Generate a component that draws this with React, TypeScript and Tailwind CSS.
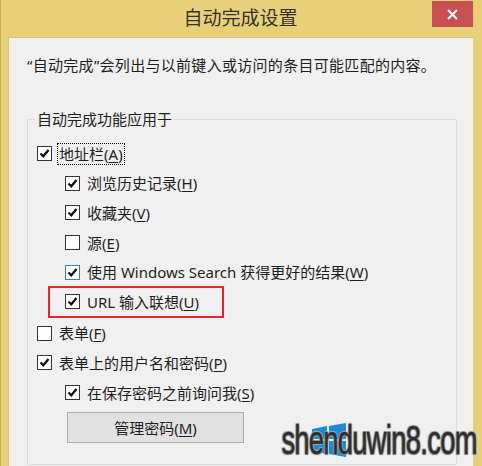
import React from 'react'

const font = { fontFamily: '"Noto Sans", "Noto Sans CJK SC", sans-serif' }

function Box({ checked, blue }: { checked: boolean; blue?: boolean }) {
    return (
        <span
            className={`flex h-[15px] w-[15px] shrink-0 items-center justify-center border bg-white ${
                blue ? 'border-[#3c7fb1]' : 'border-[#333333]'
            }`}
        >
            {checked && (
                <svg width="11" height="11" viewBox="0 0 11 11">
                    <path d="M1.5 5.5 L4.3 8.3 L9.5 2" fill="none" stroke="#111" strokeWidth="2.3" />
                </svg>
            )}
        </span>
    )
}

function Row({
    label,
    hot,
    checked,
    indent,
    blue,
    focus,
}: {
    label: string
    hot: string
    checked: boolean
    indent?: boolean
    blue?: boolean
    focus?: boolean
}) {
    return (
        <div className={`flex h-[29.6px] items-center gap-[5px] ${indent ? 'pl-[37px]' : 'pl-[9px]'}`}>
            <Box checked={checked} blue={blue} />
            <span
                className={`border px-[1px] text-[15px] leading-[20px] text-[#1e1e1e] ${
                    focus ? 'border-dotted border-black' : 'border-transparent'
                }`}
            >
                {label}(<span className="underline underline-offset-2">{hot}</span>)
            </span>
        </div>
    )
}

export default function App() {
    return (
        <div className="relative flex h-[466px] w-[482px] flex-col overflow-hidden border-l border-[#c9b05a] bg-[#e8d079] pl-[7px] pr-[9px]" style={font}>
            <div className="relative flex h-[37px] shrink-0 items-center justify-center">
                <span className="text-[19px] text-[#333333]">自动完成设置</span>
                <div className="absolute right-0 top-[1px] flex h-[26px] w-[41px] items-center justify-center bg-[#c75050]">
                    <svg width="11" height="11" viewBox="0 0 11 11">
                        <path d="M1 1 L10 10 M10 1 L1 10" stroke="#fff" strokeWidth="2" />
                    </svg>
                </div>
            </div>

            <div className="flex min-h-0 flex-1 flex-col overflow-hidden border-l border-t border-[#d9c27a] bg-[#f0f0f0] pl-[18px]">
                <p className="mt-[16px] text-[15px] leading-[22px] tracking-[0.3px] text-[#1e1e1e]">
                    “自动完成”会列出与以前键入或访问的条目可能匹配的内容。
                </p>

                <fieldset className="mt-[33px] mr-[16px] h-[356px] shrink-0 border border-[#dcdcdc] pb-0">
                    <legend className="ml-[7px] px-[2px] text-[15px] leading-[20px] text-[#1e1e1e]">自动完成功能应用于</legend>
                    <div className="mt-[10px] flex flex-col">
                        <Row label="地址栏" hot="A" checked focus />
                        <Row label="浏览历史记录" hot="H" checked indent />
                        <Row label="收藏夹" hot="V" checked indent />
                        <Row label="源" hot="E" checked={false} indent />
                        <Row label="使用 Windows Search 获得更好的结果" hot="W" checked indent blue />
                        <div className="relative">
                            <Row label="URL 输入联想" hot="U" checked indent />
                            <div className="absolute left-[20px] top-[-1px] h-[32px] w-[176px] border-2 border-[#e3262b]" />
                        </div>
                        <div className="mt-[2px]">
                            <Row label="表单" hot="F" checked={false} />
                        </div>
                        <Row label="表单上的用户名和密码" hot="P" checked />
                        <Row label="在保存密码之前询问我" hot="S" checked indent />
                        <button className="ml-[39px] mt-[5px] flex h-[31px] w-[177px] items-center justify-center border border-[#adadad] bg-[#e1e1e1] text-[15px] text-[#1e1e1e]">
                            管理密码(<span className="underline underline-offset-2">M</span>)
                        </button>
                    </div>
                </fieldset>
            </div>

            {/* watermark */}
            <div className="absolute bottom-[4px] right-[5px] h-[42px] w-[192px]">
                <svg className="absolute left-[27px] top-[3px]" width="34" height="34" viewBox="0 0 34 34">
                    <polygon points="0,6 15,3 15,16 0,16" fill="#1b8ad6" />
                    <polygon points="17,3 34,0 34,16 17,16" fill="#1b8ad6" />
                    <polygon points="0,18 15,18 15,31 0,28" fill="#1b8ad6" />
                    <polygon points="17,18 34,18 34,34 17,31" fill="#1b8ad6" />
                </svg>
                <div
                    className="absolute right-0 top-0 origin-right scale-x-[0.665] whitespace-nowrap text-[41px] leading-[40px] tracking-[-1px] text-[#2e2e2e]"
                    style={{
                        fontFamily: '"Liberation Sans", sans-serif',
                        WebkitTextStroke: '0.5px #333',
                        textShadow: '1px 1px 1px #999, -1px -1px 1px #aaa, 1px -1px 1px #aaa, -1px 1px 1px #999',
                    }}
                >
                    shenduwin8.com
                </div>
            </div>
        </div>
    )
}
